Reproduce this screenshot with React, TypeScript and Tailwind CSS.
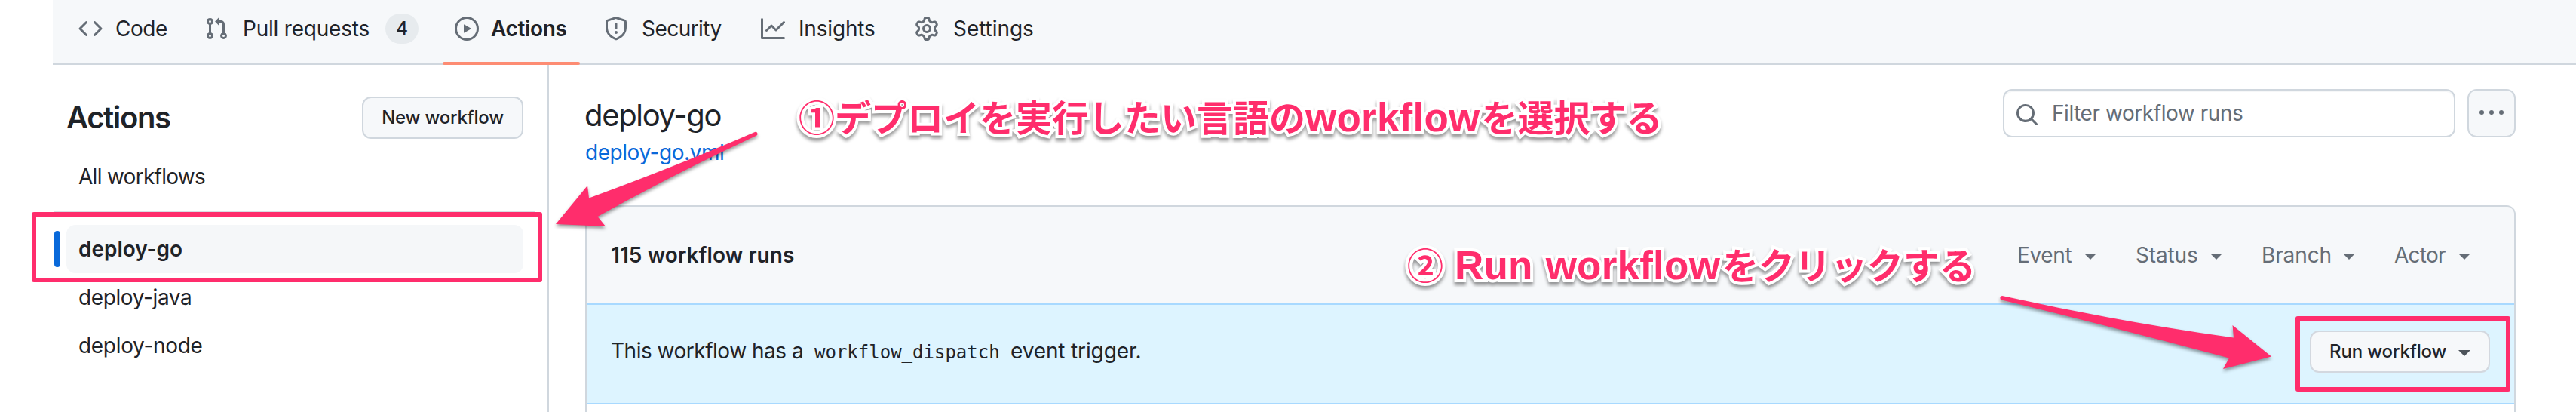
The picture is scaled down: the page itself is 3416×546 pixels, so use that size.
import React from "react";

const icons = {
  code: "m11.28 3.22 4.25 4.25a.75.75 0 0 1 0 1.06l-4.25 4.25a.749.749 0 0 1-1.275-.326.749.749 0 0 1 .215-.734L13.94 8l-3.72-3.72a.749.749 0 0 1 .326-1.275.749.749 0 0 1 .734.215Zm-6.56 0a.751.751 0 0 1 1.042.018.751.751 0 0 1 .018 1.042L2.06 8l3.72 3.72a.749.749 0 0 1-.326 1.275.749.749 0 0 1-.734-.215L.47 8.53a.75.75 0 0 1 0-1.06Z",
  pull: "M1.5 3.25a2.25 2.25 0 1 1 3 2.122v5.256a2.251 2.251 0 1 1-1.5 0V5.372A2.25 2.25 0 0 1 1.5 3.25Zm5.677-.177L9.573.677A.25.25 0 0 1 10 .854V2.5h1A2.5 2.5 0 0 1 13.5 5v5.628a2.251 2.251 0 1 1-1.5 0V5a1 1 0 0 0-1-1h-1v1.646a.25.25 0 0 1-.427.177L7.177 3.427a.25.25 0 0 1 0-.354ZM3.75 2.5a.75.75 0 1 0 0 1.5.75.75 0 0 0 0-1.5Zm0 9.5a.75.75 0 1 0 0 1.5.75.75 0 0 0 0-1.5Zm8.25.75a.75.75 0 1 0 1.5 0 .75.75 0 0 0-1.5 0Z",
  play: "M8 0a8 8 0 1 1 0 16A8 8 0 0 1 8 0ZM1.5 8a6.5 6.5 0 1 0 13 0 6.5 6.5 0 0 0-13 0Zm4.879-2.773 4.264 2.559a.25.25 0 0 1 0 .428l-4.264 2.559A.25.25 0 0 1 6 10.559V5.442a.25.25 0 0 1 .379-.215Z",
  shield: "M7.467.133a1.748 1.748 0 0 1 1.066 0l5.25 1.68A1.75 1.75 0 0 1 15 3.48V7c0 1.566-.32 3.182-1.303 4.682-.983 1.498-2.585 2.813-5.032 3.855a1.697 1.697 0 0 1-1.33 0c-2.447-1.042-4.049-2.357-5.032-3.855C1.32 10.182 1 8.566 1 7V3.48a1.75 1.75 0 0 1 1.217-1.667Zm.61 1.429a.25.25 0 0 0-.153 0l-5.25 1.68a.25.25 0 0 0-.174.238V7c0 1.358.275 2.666 1.057 3.86.784 1.194 2.121 2.34 4.366 3.297a.196.196 0 0 0 .154 0c2.245-.956 3.582-2.104 4.366-3.298C13.225 9.666 13.5 8.36 13.5 7V3.48a.251.251 0 0 0-.174-.237l-5.25-1.68ZM8.75 4.75v3a.75.75 0 0 1-1.5 0v-3a.75.75 0 0 1 1.5 0ZM9 10.5a1 1 0 1 1-2 0 1 1 0 0 1 2 0Z",
  graph: "M1.5 1.75V13.5h13.75a.75.75 0 0 1 0 1.5H.75a.75.75 0 0 1-.75-.75V1.75a.75.75 0 0 1 1.5 0Zm14.28 2.53-5.25 5.25a.75.75 0 0 1-1.06 0L7 7.06 4.28 9.78a.751.751 0 0 1-1.042-.018.751.751 0 0 1-.018-1.042l3.25-3.25a.75.75 0 0 1 1.06 0L10 7.94l4.72-4.72a.751.751 0 0 1 1.042.018.751.751 0 0 1 .018 1.042Z",
  gear: "M8 0a8.2 8.2 0 0 1 .701.031C9.444.095 9.99.645 10.16 1.29l.288 1.107c.018.066.079.158.212.224.231.114.454.243.668.386.123.082.233.09.299.071l1.103-.303c.644-.176 1.392.021 1.82.63.27.385.506.792.704 1.218.315.675.111 1.422-.364 1.891l-.814.806c-.049.048-.098.147-.088.294.016.257.016.515 0 .772-.01.147.038.246.088.294l.814.806c.475.469.679 1.216.364 1.891a7.977 7.977 0 0 1-.704 1.217c-.428.61-1.176.807-1.82.63l-1.102-.302c-.067-.019-.177-.011-.3.071a5.909 5.909 0 0 1-.668.386c-.133.066-.194.158-.211.224l-.29 1.106c-.168.646-.715 1.196-1.458 1.26a8.006 8.006 0 0 1-1.402 0c-.743-.064-1.289-.614-1.458-1.26l-.289-1.106c-.018-.066-.079-.158-.212-.224a5.738 5.738 0 0 1-.668-.386c-.123-.082-.233-.09-.299-.071l-1.103.303c-.644.176-1.392-.021-1.82-.63a8.12 8.12 0 0 1-.704-1.218c-.315-.675-.111-1.422.363-1.891l.815-.806c.05-.048.098-.147.088-.294a6.214 6.214 0 0 1 0-.772c.01-.147-.038-.246-.088-.294l-.815-.806C.635 6.045.431 5.298.746 4.623a7.92 7.92 0 0 1 .704-1.217c.428-.61 1.176-.807 1.82-.63l1.102.302c.067.019.177.011.3-.071.214-.143.437-.272.668-.386.133-.066.194-.158.211-.224l.29-1.106C6.009.645 6.556.095 7.299.03 7.53.01 7.764 0 8 0Zm-.571 1.525c-.036.003-.108.036-.137.146l-.289 1.105c-.147.561-.549.967-.998 1.189-.173.086-.34.183-.5.29-.417.278-.97.423-1.529.27l-1.103-.303c-.109-.03-.175.016-.195.045-.22.312-.412.644-.573.99-.014.031-.021.11.059.19l.815.806c.411.406.562.957.53 1.456a4.709 4.709 0 0 0 0 .582c.032.499-.119 1.05-.53 1.456l-.815.806c-.081.08-.073.159-.059.19.162.346.353.677.573.989.02.03.085.076.195.046l1.102-.303c.56-.153 1.113-.008 1.53.27.161.107.328.204.501.29.447.222.85.629.997 1.189l.289 1.105c.029.109.101.143.137.146a6.6 6.6 0 0 0 1.142 0c.036-.003.108-.036.137-.146l.289-1.105c.147-.561.549-.967.998-1.189.173-.086.34-.183.5-.29.417-.278.97-.423 1.529-.27l1.103.303c.109.029.175-.016.195-.045.22-.313.411-.644.573-.99.014-.031.021-.11-.059-.19l-.815-.806c-.411-.406-.562-.957-.53-1.456a4.709 4.709 0 0 0 0-.582c-.032-.499.119-1.05.53-1.456l.815-.806c.081-.08.073-.159.059-.19a6.464 6.464 0 0 0-.573-.989c-.02-.03-.085-.076-.195-.046l-1.102.303c-.56.153-1.113.008-1.53-.27a4.44 4.44 0 0 0-.501-.29c-.447-.222-.85-.629-.997-1.189l-.289-1.105c-.029-.11-.101-.143-.137-.146a6.6 6.6 0 0 0-1.142 0ZM11 8a3 3 0 1 1-6 0 3 3 0 0 1 6 0ZM9.5 8a1.5 1.5 0 1 0-3.001.001A1.5 1.5 0 0 0 9.5 8Z",
  search: "M10.68 11.74a6 6 0 0 1-7.922-8.982 6 6 0 0 1 8.982 7.922l3.04 3.04a.749.749 0 0 1-.326 1.275.749.749 0 0 1-.734-.215ZM11.5 7a4.499 4.499 0 1 0-8.997 0A4.499 4.499 0 0 0 11.5 7Z",
  kebab: "M8 9a1.5 1.5 0 1 0 0-3 1.5 1.5 0 0 0 0 3ZM1.5 9a1.5 1.5 0 1 0 0-3 1.5 1.5 0 0 0 0 3Zm13 0a1.5 1.5 0 1 0 0-3 1.5 1.5 0 0 0 0 3Z",
};

function Icon({ name }: { name: keyof typeof icons }) {
  return (
    <svg viewBox="0 0 16 16" className="size-8 shrink-0 overflow-visible fill-[#656d76]">
      <path d={icons[name]} />
    </svg>
  );
}

function NavItem({ icon, label, width, text, active, count }: {
  icon: keyof typeof icons;
  label: string;
  width: string;
  text: string;
  active?: boolean;
  count?: string;
}) {
  return (
    <a className={`flex h-[86px] shrink-0 flex-col justify-between ${width}`}>
      <span className="flex h-[76px] items-center pl-4 whitespace-nowrap">
        <Icon name={icon} />
        <span className={text}>{label}</span>
        {count && (
          <span className="ml-[21px] flex h-10 w-11 items-center justify-center rounded-full bg-[#e7ebee] text-[24px] font-medium">
            {count}
          </span>
        )}
      </span>
      {active && <span className="h-1 rounded-[2px] bg-[#fd8c73]" />}
    </a>
  );
}

function Caret({ className = "" }: { className?: string }) {
  return (
    <svg viewBox="0 0 16 8" className={`h-2 w-4 shrink-0 fill-current ${className}`}>
      <path d="M0 0h16l-8 8z" />
    </svg>
  );
}

function SideItem({ label, tracking }: { label: string; tracking: string }) {
  return (
    <a className={`ml-[18px] flex h-16 items-center pl-4 ${tracking}`}>{label}</a>
  );
}

function Filter({ label, width, tracking }: { label: string; width: string; tracking: string }) {
  return (
    <span className={`flex items-center justify-between ${width}`}>
      <span className={tracking}>{label}</span>
      <Caret className="mt-1" />
    </span>
  );
}

const outline =
  "absolute flex items-baseline whitespace-nowrap font-bold text-[#ff2d6c] [paint-order:stroke_fill] [-webkit-text-stroke:8px_#fff] [filter:drop-shadow(0_4px_2px_rgba(0,0,0,0.4))]";
const jp = "font-['Noto_Sans_CJK_JP',sans-serif] text-[48px] leading-[70px]";
const latin = "font-['Liberation_Sans',Arial,sans-serif] text-[53px] leading-[70px] tracking-[0.22px]";

export default function App() {
  return (
    <div className="relative h-[546px] w-[3416px] overflow-hidden bg-white pl-[70px] font-['Inter',sans-serif] text-[28px] leading-[40px] text-[#1f2328]">
      <nav className="flex h-[86px] gap-4 bg-[#f6f8fa] pl-[18px] shadow-[inset_0_-2px_0_#d0d7de]">
        <NavItem icon="code" label="Code" width="w-[151px]" text="ml-[17px] tracking-[-0.46px]" />
        <NavItem icon="pull" label="Pull requests" width="w-[316px]" text="ml-[19px] tracking-[-0.21px]" count="4" />
        <NavItem icon="play" label="Actions" width="w-[182px]" text="ml-4 font-semibold tracking-[-0.36px]" active />
        <NavItem icon="shield" label="Security" width="w-[192px]" text="ml-[18px] tracking-[-0.54px]" />
        <NavItem icon="graph" label="Insights" width="w-[188px]" text="ml-[18px] tracking-[-0.18px]" />
        <NavItem icon="gear" label="Settings" width="w-[200px]" text="ml-[19px] tracking-[-0.06px]" />
      </nav>

      <div className="flex h-[460px]">
        <aside className="w-[658px] border-r-2 border-[#d0d7de] pt-[42px] pr-8">
          <div className="flex h-14 items-center justify-between pl-[18px]">
            <h2 className="text-[40px] font-semibold tracking-[-1.37px]">Actions</h2>
            <button className="flex h-14 w-[214px] items-center justify-center rounded-xl border-2 border-[#d0d7de] bg-[#f6f8fa] text-[24px] font-medium whitespace-nowrap tracking-[-0.22px]">
              New workflow
            </button>
          </div>
          <div className="mt-[18px]">
            <SideItem label="All workflows" tracking="tracking-[-0.72px]" />
          </div>
          <div className="mt-[14px] -mr-4 ml-0.5 h-0.5 bg-[#d8dee4]" />
          <div className="mt-4 flex h-16 items-center pl-0.5">
            <span className="h-12 w-2 rounded-full bg-[#0969da]" />
            <a className="ml-2 flex h-16 flex-1 items-center rounded-xl bg-[#f5f7f9] pl-4 font-semibold tracking-[-0.03px]">
              deploy-go
            </a>
          </div>
          <SideItem label="deploy-java" tracking="tracking-[-0.38px]" />
          <SideItem label="deploy-node" tracking="tracking-[-0.31px]" />
        </aside>

        <main className="w-[2608px] pt-8 pl-12">
          <div className="flex h-[154px]">
            <div className="flex-1">
              <h1 className="-ml-px pt-[5px] text-[40px] leading-[60px] tracking-[-1.32px]">deploy-go</h1>
              <a className="block leading-[39px] tracking-[-0.45px] text-[#0969da]">deploy-go.yml</a>
            </div>
            <div className="flex h-16 w-[600px] items-center rounded-xl border-2 border-[#d0d7de] pl-[14px] text-[#656d76] shadow-[inset_0_2px_0_rgba(208,215,222,0.2)]">
              <span className="mt-1">
                <Icon name="search" />
              </span>
              <span className="ml-[17px] tracking-[-0.45px]">Filter workflow runs</span>
            </div>
            <button className="ml-4 flex size-16 items-center justify-center rounded-xl border-2 border-[#d0d7de] bg-[#f6f8fa]">
              <Icon name="kebab" />
            </button>
          </div>

          <section className="h-[280px] rounded-t-xl border-2 border-b-0 border-[#d0d7de]">
            <header className="flex h-32 items-center rounded-t-[10px] bg-[#f6f8fa] pr-[58px] pl-8">
              <strong className="flex-1 font-semibold tracking-[0.08px]">115 workflow runs</strong>
              <div className="flex gap-[52px] text-[#656d76]">
                <Filter label="Event" width="w-[105px]" tracking="tracking-[-0.35px]" />
                <Filter label="Status" width="w-[115px]" tracking="tracking-[-0.14px]" />
                <Filter label="Branch" width="w-[124px]" tracking="tracking-[-0.12px]" />
                <Filter label="Actor" width="w-[101px]" tracking="tracking-[-0.75px]" />
              </div>
            </header>
            <div className="flex h-[134px] items-center border-y-2 border-[#a8d9ff] bg-[#ddf4ff] px-8 pb-1.5">
              <p className="flex flex-1 items-baseline whitespace-nowrap">
                <span className="w-[270px] tracking-[-0.49px]">This workflow has a</span>
                <code className="w-[260px] font-['DejaVu_Sans_Mono',monospace] text-[24px]">workflow_dispatch</code>
                <span className="tracking-[-0.13px]">event trigger.</span>
              </p>
              <button className="flex h-14 w-[239px] items-center justify-between rounded-xl border-2 border-[#d3d8df] bg-[#f6f8fa] px-6 text-[24px] font-medium whitespace-nowrap">
                <span className="tracking-[-0.15px]">Run workflow</span>
                <Caret className="mt-1 text-[#4c535a]" />
              </button>
            </div>
          </section>
        </main>
      </div>

      <div className="absolute top-[281px] left-[42px] h-[93px] w-[677px] rounded-[3px] border-6 border-[#ff2d6c]" />
      <div className="absolute top-[419px] left-[3044px] h-[100px] w-[285px] rounded-[3px] border-6 border-[#ff2d6c]" />
      <svg viewBox="0 0 3416 546" className="absolute inset-0 h-[546px] w-[3416px] fill-[#ff2d6c] [filter:drop-shadow(0_3px_2px_rgba(0,0,0,0.4))]">
        <path d="M737 297L779 246L781 262.500Q900 219 1001 175A2.600 2.600 0 0 1 1003.500 179.500Q897 229 792.500 287L803 300Z" />
        <path d="M2655 392Q2808 426 2962 447.500L2960.500 431L3012 472.500L2948 489L2956 474.500Q2805 434 2654.500 397.500A2.800 2.800 0 0 1 2655 392Z" />
      </svg>
      <div className={`${outline} top-[118px] left-[1059px]`}>
        <span className={jp}>①デプロイを実行したい言語の</span>
        <span className={latin}>workflow</span>
        <span className={`${jp} ml-0.5`}>を選択する</span>
      </div>
      <div className={`${outline} top-[314px] left-[1866px]`}>
        <span className={jp}>②</span>
        <span className={`${latin} ml-[15px] [word-spacing:2px]`}>Run workflow</span>
        <span className={`${jp} ml-[3px]`}>をクリックする</span>
      </div>
    </div>
  );
}
